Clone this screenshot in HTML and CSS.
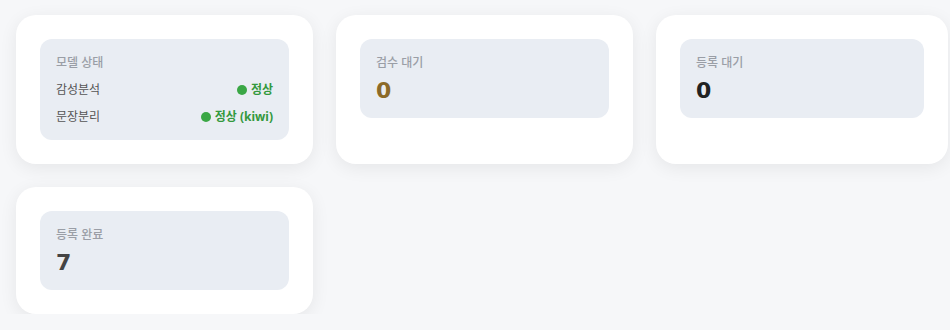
FILE: index.html
```html
<!DOCTYPE html>
<html lang="ko">
<head>
    <meta charset="utf-8">
    <link rel="stylesheet" href="styles.css">
</head>
<body>
    <div class="dashboard">
        <div class="card">
            <div class="panel">
                <div class="panel-title">모델 상태</div>
                <div class="status-row">
                    <span>감성분석</span>
                    <span class="status ok"><i class="dot"></i>정상</span>
                </div>
                <div class="status-row">
                    <span>문장분리</span>
                    <span class="status ok"><i class="dot"></i>정상 (kiwi)</span>
                </div>
            </div>
        </div>
        <div class="card">
            <div class="panel">
                <div class="panel-title">검수 대기</div>
                <div class="count pending">0</div>
            </div>
        </div>
        <div class="card">
            <div class="panel">
                <div class="panel-title">등록 대기</div>
                <div class="count">0</div>
            </div>
        </div>
        <div class="card">
            <div class="panel">
                <div class="panel-title">등록 완료</div>
                <div class="count done">7</div>
            </div>
        </div>
    </div>
</body>
</html>
```

FILE: styles.css
```css
body {
    margin: 0;
    background-color: #f6f7f9;
    font-family: "Noto Sans", "Noto Sans CJK KR", sans-serif;
    color: #333;
}

.dashboard {
    display: grid;
    grid-template-columns: 297px 297px 1fr;
    gap: 23px;
    padding: 15px 2px 0 16px;
}

.card {
    background: #fff;
    border-radius: 20px;
    padding: 24px;
    box-shadow: 0 4px 18px rgba(0, 0, 0, 0.07);
}

.panel {
    background: #e9edf3;
    border-radius: 12px;
    padding: 15px 16px 13px;
}

.panel-title {
    font-size: 12px;
    line-height: 17px;
    color: #9a9ea6;
    font-weight: 500;
}

.status-row {
    display: flex;
    justify-content: space-between;
    align-items: center;
    font-size: 12px;
    line-height: 20px;
    color: #555;
    margin-top: 7px;
}

.panel-title + .status-row {
    margin-top: 9px;
}

.status {
    display: flex;
    align-items: center;
    font-weight: 700;
}

.status.ok {
    color: #33993d;
}

.dot {
    display: inline-block;
    width: 10px;
    height: 10px;
    border-radius: 50%;
    background: #3aa745;
    margin-right: 4px;
}

.count {
    font-family: "DejaVu Sans", sans-serif;
    font-size: 22px;
    line-height: 28px;
    font-weight: 700;
    color: #222;
    margin-top: 6px;
}

.count.pending {
    color: #8c6a28;
}

.count.done {
    color: #444;
}
```
